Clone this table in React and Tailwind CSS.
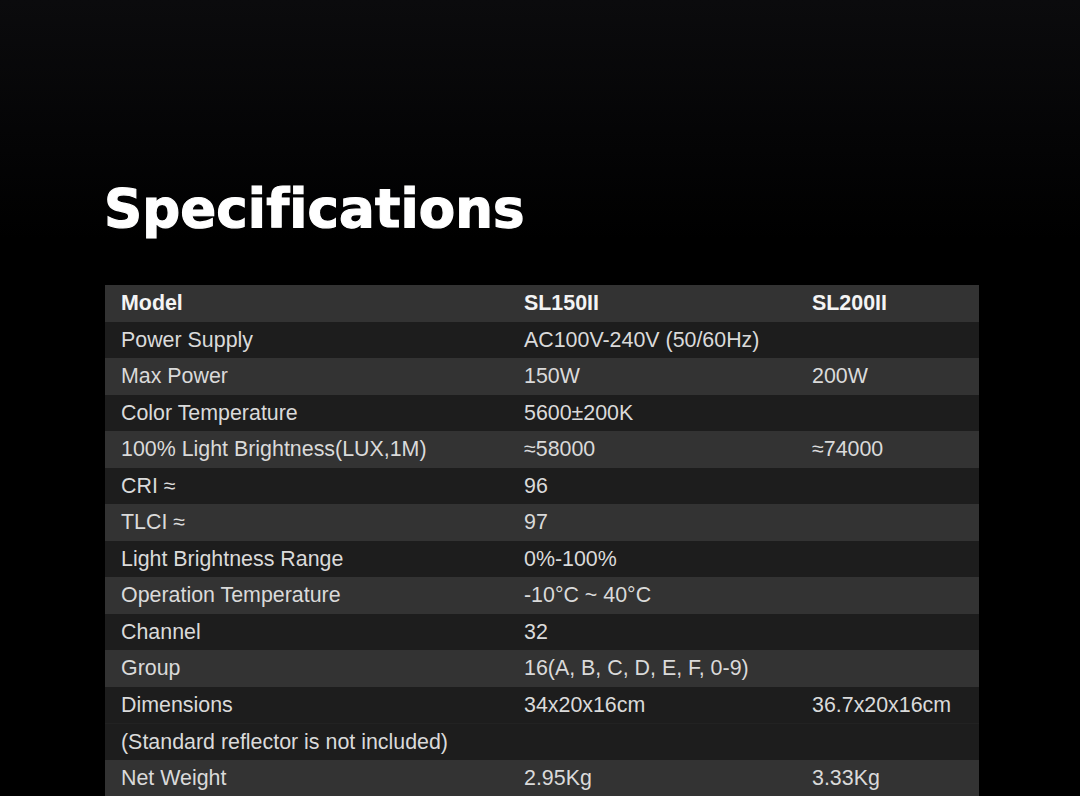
import React from "react";

const rows = [
  ["Power Supply", "AC100V-240V (50/60Hz)", ""],
  ["Max Power", "150W", "200W"],
  ["Color Temperature", "5600±200K", ""],
  ["100% Light Brightness(LUX,1M)", "≈58000", "≈74000"],
  ["CRI ≈", "96", ""],
  ["TLCI ≈", "97", ""],
  ["Light Brightness Range", "0%-100%", ""],
  ["Operation Temperature", "-10°C ~ 40°C", ""],
  ["Channel", "32", ""],
  ["Group", "16(A, B, C, D, E, F, 0-9)", ""],
  ["Dimensions", "34x20x16cm", "36.7x20x16cm"],
  ["(Standard reflector is not included)", "", ""],
  ["Net Weight", "2.95Kg", "3.33Kg"],
];

const bgs = [
  "bg-[#1d1d1d]",
  "bg-[#333333]",
  "bg-[#1d1d1d]",
  "bg-[#333333]",
  "bg-[#1d1d1d]",
  "bg-[#333333]",
  "bg-[#1d1d1d]",
  "bg-[#333333]",
  "bg-[#1d1d1d]",
  "bg-[#333333]",
  "bg-[#1d1d1d]",
  "bg-[#1d1d1d] border-t border-[#222222]",
  "bg-[#333333]",
];

export default function App() {
  return (
    <div
      className="w-[1080px] h-[796px] overflow-hidden bg-[linear-gradient(180deg,#0b0b0d_0%,#040405_150px,#000000_240px)]"
      style={{ fontFamily: '"Liberation Sans", Arial, sans-serif' }}
    >
      <div className="pl-[104px] pt-[179px]">
        <h1
          className="text-[53px] leading-[60px] font-bold text-white tracking-[0.1px] [-webkit-text-stroke:1.2px_white]"
          style={{ fontFamily: '"DejaVu Sans", sans-serif' }}
        >
          Specifications
        </h1>
      </div>
      <div className="ml-[105px] mt-[46px] w-[874px] text-[21.4px] text-[#dadada]">
        <div className="grid grid-cols-[403px_288px_183px] h-[36.5px] items-center bg-[#333333] font-bold text-[#f4f4f4]">
          <div className="pl-4">Model</div>
          <div className="pl-4">SL150II</div>
          <div className="pl-4">SL200II</div>
        </div>
        {rows.map((r, i) => (
          <div
            key={i}
            className={`grid grid-cols-[403px_288px_183px] h-[36.5px] items-center ${bgs[i]}`}
          >
            <div className="pl-4 whitespace-nowrap">{r[0]}</div>
            <div className="pl-4 whitespace-nowrap">{r[1]}</div>
            <div className="pl-4 whitespace-nowrap">{r[2]}</div>
          </div>
        ))}
      </div>
    </div>
  );
}
